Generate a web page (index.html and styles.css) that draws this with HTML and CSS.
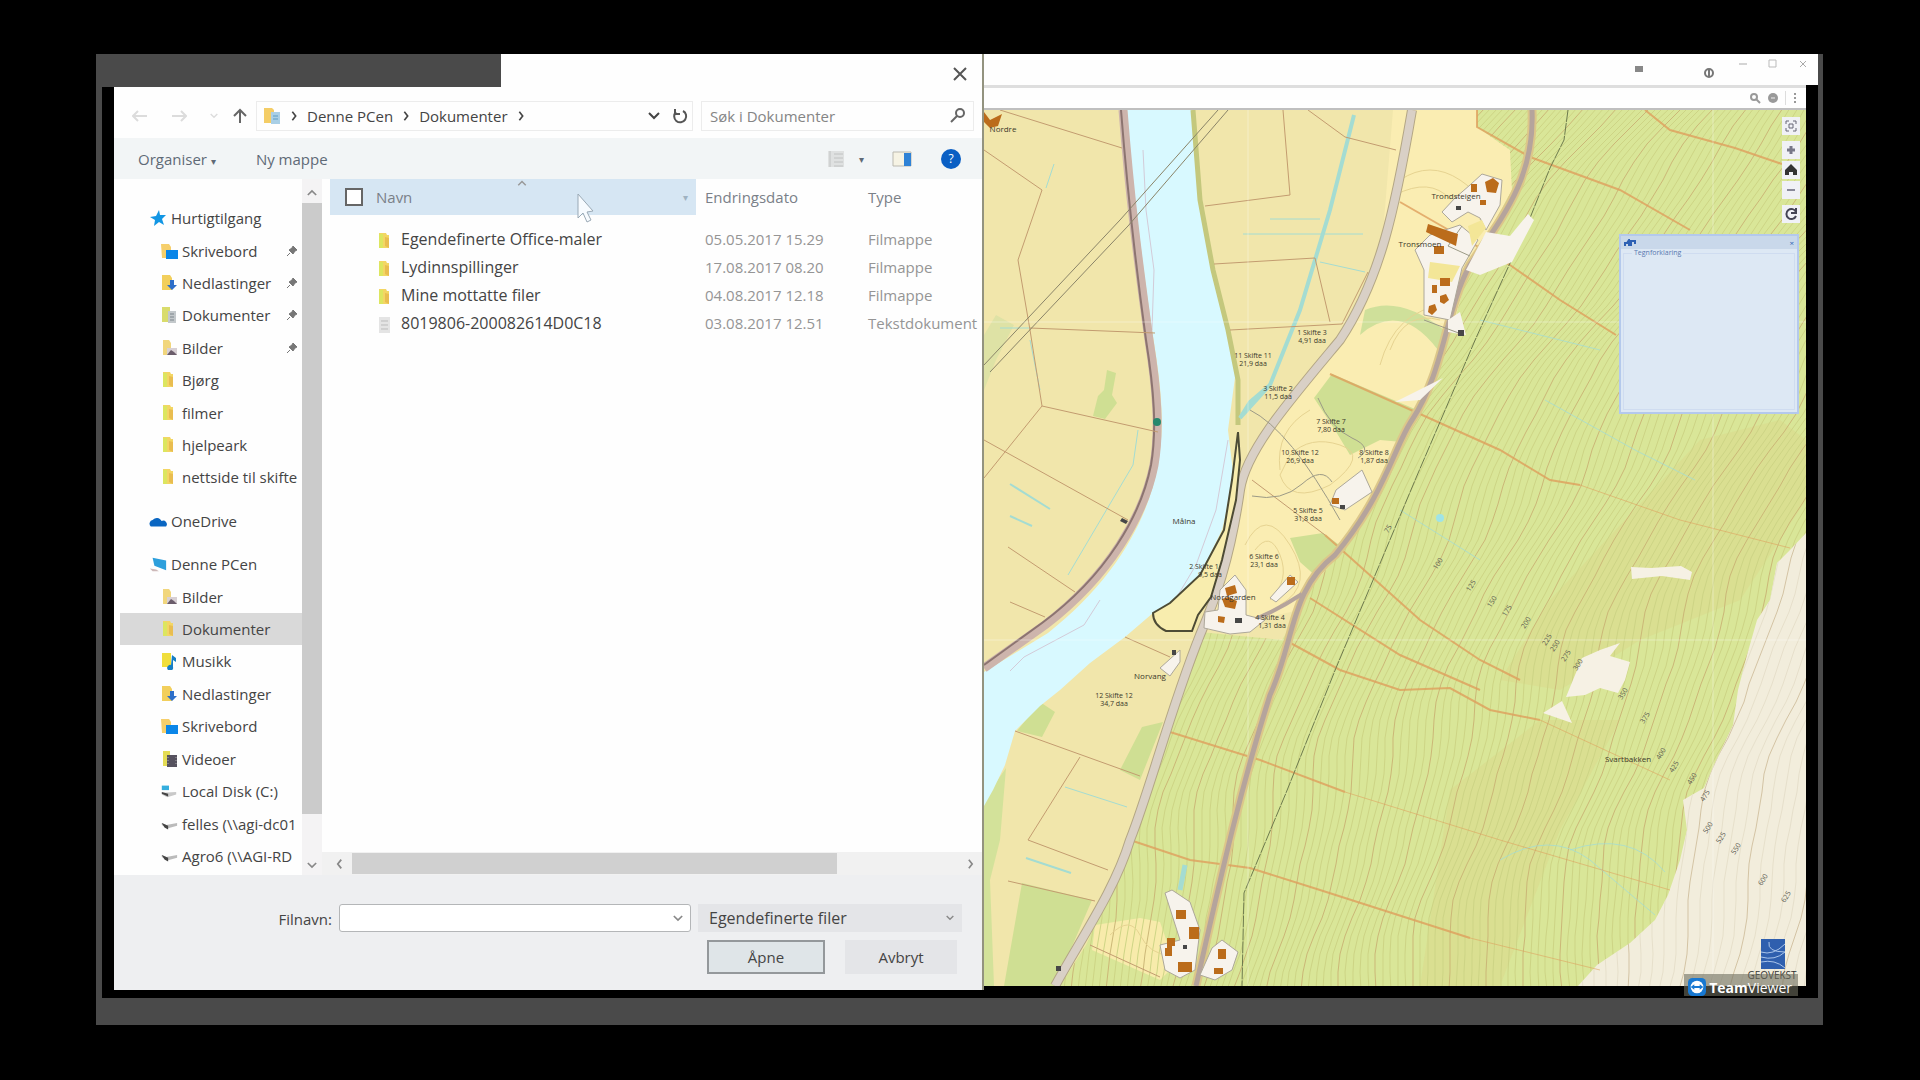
FILE: index.html
```html
<!DOCTYPE html>
<html lang="no">
<head>
  <meta charset="UTF-8" />
  <meta name="viewport" content="width=device-width, initial-scale=1.0"/>
  <title>Skiftekart</title>
  <link rel="stylesheet" href="styles.css">
</head>
<body>
  <svg class="symbols" width="0" height="0" aria-hidden="true">
    <symbol id="folder" viewBox="0 0 18 18"><path d="M3 1h7l1 2h2v13H3z" fill="#f3d664"/><path d="M3 2h4v14H3z" fill="#dce660"/><path d="M9 5l4 1v10l-4-2z" fill="#e9bd50"/></symbol>
    <symbol id="desktop" viewBox="0 0 18 18"><path d="M1 2h8l2 3v11H2z" fill="#f6cf6b"/><path d="M6 8h12v9H6z" fill="#0b86e8"/></symbol>
    <symbol id="download" viewBox="0 0 18 18"><path d="M2 1h8l2 3v12H2z" fill="#f2cf5c"/><path d="M10 6h4v5h3l-5 5-5-5h3z" fill="#2d6fc9"/></symbol>
    <symbol id="docs" viewBox="0 0 18 18"><path d="M2 1h8v15H2z" fill="#d9dc6c"/><path d="M8 5h8v12H8z" fill="#c3c8cb"/><path d="M10 8h4M10 11h4M10 14h4" stroke="#7d858b"/></symbol>
    <symbol id="library" viewBox="0 0 18 18"><path d="M1 1h8l2 2v13H1z" fill="#f4cd66"/><path d="M8 5h9v12H8z" fill="#a9cfe6"/><path d="M10 9h5M10 12h5" stroke="#5d9dc4"/></symbol>
    <symbol id="picture" viewBox="0 0 18 18"><path d="M3 1h6l2 3v12H3z" fill="#f1d67d"/><path d="M7 9h10v7H7z" fill="#d8d0d4"/><path d="M7 16l4-5 3 2 3 3z" fill="#6b5d6b"/></symbol>
    <symbol id="music" viewBox="0 0 18 18"><path d="M2 1h9v14H2z" fill="#f0de3c"/><path d="M12 3l4 3v4l-3-2v7a3 3 0 1 1-2-2z" fill="#167ec4"/></symbol>
    <symbol id="video" viewBox="0 0 18 18"><path d="M3 1h7v15H3z" fill="#e4dc55"/><path d="M7 5h10v12H7z" fill="#56525f"/><path d="M8 7v9M16 7v9" stroke="#aaa" stroke-dasharray="1 2"/></symbol>
    <symbol id="star" viewBox="0 0 18 18"><path d="M10 1l1 5 6 0-4 4 2 6-5-3-5 4 1-6-5-3 6-1z" fill="#1296e4"/></symbol>
    <symbol id="cloud" viewBox="0 0 20 18"><path d="M2 15a4 4 0 0 1 2-7 6 6 0 0 1 10 1 4 4 0 0 1 5 6z" fill="#0a66c2"/></symbol>
    <symbol id="pc" viewBox="0 0 20 18"><path d="M4 2l15 3v11L6 11z" fill="#2d9fdc"/><path d="M1 14l7 1 3 2-7 0z" fill="#cdb9b9"/></symbol>
    <symbol id="disk" viewBox="0 0 20 18"><path d="M2 3h8v5H2z" fill="#35aede"/><path d="M2 11l16-1v3l-10 3-6-3z" fill="#c9c9c9"/><path d="M2 10l7 2v3l-7-3z" fill="#444"/></symbol>
    <symbol id="netdisk" viewBox="0 0 20 18"><path d="M2 8l5 2 12-2v3l-11 3-6-4z" fill="#bbb"/><path d="M2 8l7 3v4l-4-2z" fill="#444"/></symbol>
    <symbol id="pin" viewBox="0 0 12 12"><path d="M7 1l4 4-2 1-2 3-4-4 3-2zM4 8l-3 3" fill="#777" stroke="#777"/></symbol>
    <symbol id="down" viewBox="0 0 12 8"><path d="M1 1l5 5 5-5" fill="none" stroke="currentColor" stroke-width="2"/></symbol>
    <symbol id="right" viewBox="0 0 8 12"><path d="M2 1l4 5-4 5" fill="none" stroke="currentColor" stroke-width="2"/></symbol>
  </svg>

  <main class="screen">
    <section class="dialog" aria-label="Åpne">
      <div class="dialog-top">
        <div class="backdrop"></div>
        <button class="close" aria-label="Lukk"><svg width="16" height="16"><path d="M2 2l12 12M14 2L2 14" stroke="#555" stroke-width="2"/></svg></button>
      </div>

      <div class="dialog-body">
        <div class="nav-row">
          <button class="nav-btn dim" aria-label="Tilbake"><svg width="16" height="12"><path d="M15 6H2M6 1L1 6l5 5" fill="none" stroke="currentColor" stroke-width="2"/></svg></button>
          <button class="nav-btn dim" aria-label="Fram"><svg width="16" height="12"><path d="M1 6h13M10 1l5 5-5 5" fill="none" stroke="currentColor" stroke-width="2"/></svg></button>
          <button class="nav-btn dim small" aria-label="Nylige steder"><svg width="8" height="6"><use href="#down"/></svg></button>
          <button class="nav-btn up" aria-label="Opp"><svg width="16" height="16"><path d="M8 15V2M2 8l6-6 6 6" fill="none" stroke="currentColor" stroke-width="2"/></svg></button>
          <div class="address">
            <svg width="18" height="18"><use href="#library"/></svg>
            <svg width="8" height="10"><use href="#right"/></svg>
            <a href="#">Denne PCen</a>
            <svg width="8" height="10"><use href="#right"/></svg>
            <a href="#">Dokumenter</a>
            <svg width="8" height="10"><use href="#right"/></svg>
            <button class="history" aria-label="Tidligere plasseringer"><svg width="12" height="8"><use href="#down"/></svg></button>
            <button class="reload" aria-label="Oppdater"><svg width="16" height="16"><path d="M4 4a6 6 0 1 0 7-1M3 1v5h5" fill="none" stroke="#555" stroke-width="2"/></svg></button>
          </div>
          <div class="search">
            <input type="text" aria-label="Søk i Dokumenter" placeholder="Søk i Dokumenter" />
            <svg width="18" height="18"><circle cx="11" cy="6" r="4" fill="none" stroke="#666" stroke-width="2"/><path d="M8 9l-6 6" stroke="#666" stroke-width="2"/></svg>
          </div>
        </div>

        <div class="tools">
          <button>Organiser <span class="tri">▾</span></button>
          <button>Ny mappe</button>
          <div class="view-tools">
            <button aria-label="Visning"><svg width="18" height="18"><path d="M1 1h16v16H1z" fill="#dfe1e1"/><path d="M3 1v16M7 4h9M7 8h9M7 12h9M7 16h9" stroke="#c0c2c2"/></svg></button>
            <button class="tri" aria-label="Flere visninger">▾</button>
            <button aria-label="Forhåndsvisning"><svg width="20" height="16"><path d="M1 1h18v14H1z" fill="#f6f3e4" stroke="#bbb9b0"/><path d="M12 2h7v13h-7z" fill="#2f82d6"/></svg></button>
            <button aria-label="Hjelp"><svg width="22" height="22"><circle cx="11" cy="11" r="10" fill="#0a5fc4"/><text x="11" y="15" class="help-mark">?</text></svg></button>
          </div>
        </div>

        <div class="main">
          <nav class="tree">
            <ul>
              <li class="root"><svg><use href="#star"/></svg><a href="#">Hurtigtilgang</a></li>
              <li><svg><use href="#desktop"/></svg><a href="#">Skrivebord</a><svg class="pin"><use href="#pin"/></svg></li>
              <li><svg><use href="#download"/></svg><a href="#">Nedlastinger</a><svg class="pin"><use href="#pin"/></svg></li>
              <li><svg><use href="#docs"/></svg><a href="#">Dokumenter</a><svg class="pin"><use href="#pin"/></svg></li>
              <li><svg><use href="#picture"/></svg><a href="#">Bilder</a><svg class="pin"><use href="#pin"/></svg></li>
              <li><svg><use href="#folder"/></svg><a href="#">Bjørg</a></li>
              <li><svg><use href="#folder"/></svg><a href="#">filmer</a></li>
              <li><svg><use href="#folder"/></svg><a href="#">hjelpeark</a></li>
              <li><svg><use href="#folder"/></svg><a href="#">nettside til skifte</a></li>
              <li class="root apart"><svg><use href="#cloud"/></svg><a href="#">OneDrive</a></li>
              <li class="root apart"><svg><use href="#pc"/></svg><a href="#">Denne PCen</a></li>
              <li><svg><use href="#picture"/></svg><a href="#">Bilder</a></li>
              <li class="selected"><svg><use href="#folder"/></svg><a href="#">Dokumenter</a></li>
              <li><svg><use href="#music"/></svg><a href="#">Musikk</a></li>
              <li><svg><use href="#download"/></svg><a href="#">Nedlastinger</a></li>
              <li><svg><use href="#desktop"/></svg><a href="#">Skrivebord</a></li>
              <li><svg><use href="#video"/></svg><a href="#">Videoer</a></li>
              <li><svg><use href="#disk"/></svg><a href="#">Local Disk (C:)</a></li>
              <li><svg><use href="#netdisk"/></svg><a href="#">felles (\\agi-dc01</a></li>
              <li><svg><use href="#netdisk"/></svg><a href="#">Agro6 (\\AGI-RD</a></li>
            </ul>
          </nav>
          <div class="vscroll">
            <svg class="flip" width="10" height="7"><use href="#down"/></svg>
            <div class="vthumb"></div>
            <svg width="10" height="7"><use href="#down"/></svg>
          </div>

          <div class="files">
            <table>
              <colgroup><col class="col-name"><col class="col-date"><col></colgroup>
              <thead>
                <tr>
                  <th class="name-head">
                    <div class="head-cell">
                      <input type="checkbox" id="all" aria-label="Merk alle"><label for="all">Navn</label>
                      <span class="tri">▾</span>
                    </div>
                    <svg class="sort" width="10" height="6"><use href="#down"/></svg>
                    <svg class="pointer" width="20" height="34"><path d="M3 1v24l5-5 4 9 4-2-4-8 6-1z" fill="#f7fbff" stroke="#9aa9b5"/></svg>
                  </th>
                  <th>Endringsdato</th>
                  <th>Type</th>
                </tr>
              </thead>
              <tbody>
                <tr><td><svg><use href="#folder"/></svg>Egendefinerte Office-maler</td><td>05.05.2017 15.29</td><td>Filmappe</td></tr>
                <tr><td><svg><use href="#folder"/></svg>Lydinnspillinger</td><td>17.08.2017 08.20</td><td>Filmappe</td></tr>
                <tr><td><svg><use href="#folder"/></svg>Mine mottatte filer</td><td>04.08.2017 12.18</td><td>Filmappe</td></tr>
                <tr><td><svg><path d="M3 1h11v16H3z" fill="#e4e4e4"/><path d="M5 5h7M5 9h7M5 13h7" stroke="#bbb"/></svg>8019806-200082614D0C18</td><td>03.08.2017 12.51</td><td>Tekstdokument</td></tr>
              </tbody>
            </table>
            <div class="hscroll">
              <svg class="flip" width="7" height="12"><use href="#right"/></svg>
              <div class="hthumb"></div>
              <svg width="7" height="10"><use href="#right"/></svg>
            </div>
          </div>
        </div>

        <form class="footer">
          <label for="filename">Filnavn:</label>
          <div class="combo"><input type="text" id="filename"><svg width="10" height="7"><use href="#down"/></svg></div>
          <div class="combo kind">
            <select aria-label="Filtype"><option>Egendefinerte filer</option></select>
            <svg width="8" height="6"><use href="#down"/></svg>
          </div>
          <div class="actions">
            <button type="button" class="open">Åpne</button>
            <button type="button">Avbryt</button>
          </div>
        </form>
      </div>
    </section>

    <section class="browser" aria-label="Kart">
      <div class="window-bar">
        <svg class="tab-mark" width="10" height="8"><path d="M1 1h8v6H1z" fill="#888"/></svg>
        <svg class="user" width="12" height="12"><circle cx="6" cy="6" r="4" fill="none" stroke="#777" stroke-width="2"/><path d="M6 3v6" stroke="#777" stroke-width="2"/></svg>
        <button aria-label="Minimer"><svg width="10" height="10"><path d="M1 5h8" stroke="#aaa"/></svg></button>
        <button aria-label="Maksimer"><svg width="10" height="10"><path d="M1 1h7v7H1z" fill="none" stroke="#bbb"/></svg></button>
        <button aria-label="Lukk vindu"><svg width="10" height="10"><path d="M2 2l6 6M8 2L2 8" stroke="#aaa"/></svg></button>
      </div>
      <div class="url-bar">
        <svg width="12" height="12"><circle cx="5" cy="5" r="3" fill="none" stroke="#999" stroke-width="2"/><path d="M7 7l4 4" stroke="#999" stroke-width="2"/></svg>
        <svg width="12" height="12"><circle cx="6" cy="6" r="5" fill="#999"/><path d="M4 6h4" stroke="#eee"/></svg>
        <span class="divider"></span>
        <svg width="6" height="12"><path d="M3 1v2M3 5v2M3 9v2" stroke="#999" stroke-width="2"/></svg>
      </div>

      <div class="map">
        <svg class="map-canvas" viewBox="984 110 822 876" preserveAspectRatio="xMidYMid slice" role="img" aria-label="Kart over skifter">
          <defs>
            <path id="hill" d="M1477 110V127L1510 150 1512 190 1490 230 1468 272 1452 330 1432 385 1412 425 1397 450 1380 495 1345 548 1310 588 1300 610 1282 640 1200 632 1180 680 1165 733 1138 830 1086 945 1060 986H1806V110Z"/>
            <clipPath id="hillClip"><use href="#hill"/></clipPath>
            <path id="fjell" d="M1806 533L1790 550 1777 563 1770 600 1757 620 1747 655 1738 690 1733 725 1714 765 1704 788 1683 800 1687 830 1680 860 1668 895 1655 920 1630 943 1597 965 1578 986H1806Z"/>
            <clipPath id="fjellClip"><use href="#fjell"/></clipPath>
          </defs>
          <rect x="984" y="110" width="822" height="876" fill="#f1e6ab"/>
          <path d="M1393 110H1477V127L1510 150 1512 190 1452 330 1412 425 1380 495 1300 610 1200 632 1240 470 1330 350 1380 270Z" fill="#faedb2"/>
          <!-- forest -->
          <use href="#hill" fill="#d9e698"/>
          <path d="M1550 600L1700 440 1780 420 1806 440V500L1740 600 1640 640 1560 690 1500 680ZM1450 790L1540 720 1620 720 1560 830 1500 986H1420Z" fill="#dadb8c" opacity=".6"/>
          <path d="M1314 398L1332 374 1422 412 1402 442 1380 440 1350 455 1335 430ZM1290 538L1323 533 1342 547 1318 578 1300 562ZM1040 702L1055 712 1042 737 1017 731ZM1142 727L1163 722 1140 780 1120 770ZM1022 883L1092 900 1055 986H1004ZM1107 370l9 3-4 22 5 8-12 16-12-3 5-20 6-6Z" fill="#cfdf93"/>
          <path d="M984 800L1006 768 1000 840 990 880 994 986H984Z" fill="#d3e29a"/>
          <path d="M984 335l12-20 18 10-18 35-12 30Z" fill="#d6e0a2" opacity=".7"/>
          <path d="M1095 925L1140 918 1160 922 1175 965 1160 980 1092 950Z" fill="#f8ebab"/>
          <path d="M1365 310Q1400 295 1444 330L1438 350Q1400 300 1360 335Z" fill="#cfe09a"/>
          <g clip-path="url(#hillClip)"><g id="contours" class="contours"></g></g>
          <g class="field-contours">
            <path d="M1400 180q30-20 60 0t20 40M1395 195q35-18 55 4M1390 350q15-40 50-30M1380 365q15-55 65-60M1290 455q20-20 50-10t-10 40q-40 20-50-10zM1280 470q-5-40 30-60M1245 545q20-40 45 0t-10 60M1255 550q15-20 25 5t-10 45M1110 935q20-20 30 0t30 20"/>
          </g>
          <use href="#fjell" fill="#f2eddc"/>
          <g clip-path="url(#fjellClip)"><g id="fjellContours" class="contours high"></g></g>
          <path d="M1566 697L1582 658 1600 650 1620 643 1610 656 1630 662 1625 680 1618 693 1600 688 1585 695ZM1543 713L1562 701 1572 723ZM1631 567l20 1 30-2 11 6-2 8-28-4-30 3Z" fill="#f6f1e4"/>
          <!-- river -->
          <path d="M1127 110C1133 190 1142 260 1152 330C1160 380 1166 420 1158 465C1148 520 1115 580 1048 633L984 672V806L993 790 1005 765 1015 731 1040 706 1060 690 1090 663 1125 637 1153 613 1170 603 1200 575 1222 530 1234 480 1228 430 1236 370 1228 330 1213 270 1200 200 1193 110Z" fill="#d8f9ff"/>
          <path d="M1193 110L1200 200 1213 270 1228 330 1238 380V425" fill="none" stroke="#c4c87d" stroke-width="5"/>
          <path d="M1143 150l3 60 8 60-2 60M1228 440l-12 70-20 55-18 30M1100 600l-16 25-60 32-14 14" fill="none" stroke="#d3cbd8"/>
          <g class="dyke"><path d="M1123 110C1130 200 1138 260 1149 340C1157 390 1160 430 1154 465C1144 515 1110 575 1045 625L984 668" stroke="#cdb4ac" stroke-width="9"/><path d="M1121 110C1128 200 1135 260 1146 340C1154 390 1157 430 1151 465C1141 515 1107 575 1042 623L984 665" stroke="#8c7470" stroke-width="2"/></g>
          <!-- streams -->
          <g fill="none" stroke="#a4dcd2">
            <path d="M1354 115L1330 210 1300 310 1270 385" stroke-width="4"/>
            <path d="M1270 385L1240 418 1250 402Z" fill="#d8f9ff" stroke-width="4"/>
            <path d="M1010 484l40 25M1010 516l22 10M1026 858l45 15" stroke-width="2"/>
            <path d="M1030 340l10 50M1000 328h30M1054 164l-8 24M1138 430l-5 35-65 110M1065 787l62 20M1320 262l45 10M1243 234h120M1270 219h50"/>
            <path d="M1185 865l-5 25" stroke-width="5"/>
            <path d="M1400 510l80 50M1545 400l90 50 60 30M1500 860q50-30 90 0l65 55M1570 850q60-20 95 22M1480 320l120 30" opacity=".8"/>
          </g>
          <circle cx="1440" cy="518" r="4" fill="#a0e4e6"/>
          <!-- property borders -->
          <g fill="none" stroke="#c39c70">
            <path d="M984 150L1042 190 1018 260 1030 330 1042 406 984 478M1042 406L1158 432M984 440L1128 520M1000 110L1122 148M1030 328L1155 333M1008 547L1075 592M1010 602L1045 617M1205 206L1290 195 1283 110M1214 264L1315 258 1330 322M1230 330L1342 324 1368 272M1308 110L1345 137 1396 150M1015 731L1140 776M1080 757L1028 840 1108 870M1008 881L1095 901M1252 480L1325 535M1125 637l45 20M1090 945l70 32"/>
          </g>
          <g fill="none" stroke="#df9f5c" stroke-width="2" opacity=".8">
            <path d="M1477 110V127L1530 157 1620 190 1690 230M1400 202L1440 225 1510 265 1560 300 1616 335M1645 110L1670 130 1735 148 1782 164M1330 374L1420 414 1500 450 1550 480 1580 485M1325 535L1420 620 1480 660 1520 680M1310 598L1400 655 1480 690M1285 640L1340 670 1400 690 1450 688 1490 710 1540 720M1170 732L1260 760 1345 792M1130 840L1190 860 1250 868 1320 890 1420 922 1470 938"/>
            <path d="M1580 485L1680 520 1790 548M1540 720L1670 780M1345 792L1500 840 1670 890M1470 938L1600 970" stroke-width="1" opacity=".7"/>
          </g>
          <path d="M984 365L1120 220 1218 110M990 372L1128 226 1228 110" fill="none" stroke="#8a8468"/>
          <path d="M1568 110l-4 30-14 28-24 60-50 110-60 140-80 190-50 125-42 100-2 93" fill="none" stroke="#6d7a4d" stroke-dasharray="12 1"/>
          <path d="M1248 110V986M984 322H1806M984 640H1806M1713 110V986" fill="none" stroke="#fff" opacity=".35"/>
          <!-- roads -->
          <g fill="none">
            <path d="M1412 110C1395 210 1380 280 1340 340C1290 400 1246 450 1240 490C1230 560 1215 600 1200 635C1170 710 1150 790 1130 840C1115 890 1080 940 1055 986" stroke="#b3a684" stroke-width="10"/>
            <path d="M1412 110C1395 210 1380 280 1340 340C1290 400 1246 450 1240 490C1230 560 1215 600 1200 635C1170 710 1150 790 1130 840C1115 890 1080 940 1055 986" stroke="#d9d0c6" stroke-width="8"/>
            <path d="M1532 110C1535 180 1500 220 1470 265C1445 310 1445 370 1412 420C1395 445 1385 495 1335 555C1290 590 1295 640 1270 695C1240 790 1220 880 1196 986" stroke="#dcc68a" stroke-width="9"/>
            <path d="M1532 110C1535 180 1500 220 1470 265C1445 310 1445 370 1412 420C1395 445 1385 495 1335 555C1290 590 1295 640 1270 695C1240 790 1220 880 1196 986" stroke="#b5a49c" stroke-width="5"/>
            <path d="M1302 594Q1270 615 1240 625" stroke="#b5a49c" stroke-width="4"/>
          </g>
          <!-- farmyards -->
          <g fill="#f7f3ec" stroke="#ada89a">
            <path d="M1470 185L1482 174 1502 180 1500 205 1486 230 1480 218 1468 212 1452 222 1442 212 1455 198Z"/>
            <path d="M1486 232L1510 236 1528 214 1534 220 1512 262 1480 275 1466 270Z" stroke="none"/>
            <path d="M1430 235L1460 225 1478 240 1462 268 1450 320 1424 315 1424 270 1415 250Z"/>
            <path d="M1448 320L1460 312 1466 335 1448 332ZM1443 378L1420 400 1395 402Z" stroke="none"/>
            <path d="M1336 490L1362 470 1372 492 1345 510 1330 505Z"/>
            <path d="M1220 590L1235 575 1246 590V615L1265 620 1250 632 1230 634 1204 628 1205 612 1218 610Z"/>
            <path d="M1290 575L1298 582 1276 602 1270 598ZM1180 650l-20 18 10 8 10-14Z"/>
            <path d="M1165 893L1172 890 1190 902 1200 930 1195 970 1180 978 1165 970 1160 945 1180 940Z"/>
            <path d="M1212 948L1222 940 1238 952 1232 970 1215 980 1200 975Z"/>
          </g>
          <path d="M1468 226l14-6 4 8-14 18z" fill="#f3e697"/>
          <path d="M1430 262l30 4-8 16-24-4z" fill="#f3e697"/>
          <path d="M1250 410q40 20 90 110M1318 398q12 30 34 40t6 20M1252 496q30 6 50-12t30-2M1462 226l-14 20 22 10M1424 320l40 15" fill="none" stroke="#9c9a86"/>
          <path d="M1485 182l8-4 6 5-3 10-9-1zM1471 184h6v8h-6ZM1480 200h6v5h-6ZM1428 224l30 10 -2 12-30-14ZM1434 246h10v8h-10ZM1440 278h10v8h-10ZM1432 285h5v8h-5ZM1440 296l6-2 3 6-5 4-4-2ZM1429 306l6-2 2 6-5 5-4-3ZM1225 588l10-3 2 8-10 3ZM1222 599l6-2 9 4-2 8-10-2ZM1218 616l7 1-1 6-6-1ZM1287 577h8v8h-8ZM1332 498h7v6h-7ZM1176 910h10v9h-10ZM1189 927h10v12h-10ZM1167 938h8v8h-3v10h-7v-8h2ZM1178 962h14v10h-14ZM1218 949h8v10h-8ZM1214 968h9v6h-9ZM984 112l6 8 12-6-4 12-8 2-6-6Z" fill="#bb6c1b"/>
          <path d="M1340 505h5v4h-5ZM1458 330h6v6h-6ZM1456 206h5v4h-5ZM1235 618h7v5h-7ZM1183 945h4v4h-4ZM1056 966h5v5h-5ZM1172 650h4v5h-4ZM1122 518l6 3-2 3-6-3Z" fill="#474747"/>
          <circle cx="1157" cy="422" r="4" fill="#26886c"/>
          <!-- selected field -->
          <path d="M1238 432L1232 480 1224 530 1200 575 1170 603 1153 613Q1153 625 1166 631L1192 631 1198 615 1211 597 1222 560 1236 500 1240 460Z" fill="#f8edae" stroke="#4d4b35" stroke-width="2"/>
          <g class="field-labels">
            <text x="1312" y="335">1 Skifte 3<tspan x="1312" dy="8">4,91 daa</tspan></text>
            <text x="1253" y="358">11 Skifte 11<tspan x="1253" dy="8">21,9 daa</tspan></text>
            <text x="1278" y="391">3 Skifte 2<tspan x="1278" dy="8">11,5 daa</tspan></text>
            <text x="1331" y="424">7 Skifte 7<tspan x="1331" dy="8">7,80 daa</tspan></text>
            <text x="1300" y="455">10 Skifte 12<tspan x="1300" dy="8">26,9 daa</tspan></text>
            <text x="1374" y="455">8 Skifte 8<tspan x="1374" dy="8">1,87 daa</tspan></text>
            <text x="1308" y="513">5 Skifte 5<tspan x="1308" dy="8">31,8 daa</tspan></text>
            <text x="1264" y="559">6 Skifte 6<tspan x="1264" dy="8">23,1 daa</tspan></text>
            <text x="1204" y="569">2 Skifte 1<tspan x="1210" dy="8">9,5 daa</tspan></text>
            <text x="1114" y="698">12 Skifte 12<tspan x="1114" dy="8">34,7 daa</tspan></text>
            <text x="1270" y="620">4 Skifte 4<tspan x="1272" dy="8">1,31 daa</tspan></text>
          </g>
          <g class="place-labels">
            <text x="1184" y="524">Målna</text><text x="1150" y="679">Norvang</text>
            <text x="1456" y="199">Trondsteigen</text><text x="1420" y="247">Tronsmoen</text>
            <text x="1233" y="600">Nordgarden</text>
            <text x="1628" y="762">Svartbakken</text><text x="1003" y="132">Nordre</text>
          </g>
          <g id="heights" class="height-labels"></g>
          <path d="M1761 939h24v30h-24Z" fill="#2f5fae"/>
          <path d="M1761 952q12 4 24-8M1761 957q14 4 24-5M1769 942q-2 10 16 10M1761 962q14-3 24 6" fill="none" stroke="#a9c4ea"/>
          <text x="1772" y="979" class="logo-text">GEOVEKST</text>
        </svg>

        <div class="map-buttons">
          <button aria-label="Fullskjerm"><svg width="12" height="12"><path d="M1 4V1h3M8 1h3v3M11 8v3H8M4 11H1V8M4 4h4v4H4z" fill="none" stroke="#667"/></svg></button>
          <button class="apart" aria-label="Zoom inn"><svg width="10" height="10"><path d="M5 1v8M1 5h8" stroke="#778" stroke-width="3"/></svg></button>
          <button aria-label="Hjem"><svg width="12" height="12"><path d="M6 0l6 6v5H8V8H4v3H0V6z" fill="#333"/></svg></button>
          <button aria-label="Zoom ut"><svg width="10" height="10"><path d="M1 5h8" stroke="#889" stroke-width="2"/></svg></button>
          <button class="apart" aria-label="Last på nytt"><svg width="14" height="14"><path d="M12 5a5 5 0 1 0 0 4M12 1v5H7" fill="none" stroke="#445" stroke-width="2"/></svg></button>
        </div>

        <aside class="legend">
          <div class="legend-bar">
            <svg width="12" height="8"><path d="M1 7V4h2l2-3v6M7 7V2h4v3" fill="none" stroke="#2e61b4" stroke-width="2"/></svg>
            <button aria-label="Lukk tegnforklaring">×</button>
          </div>
          <fieldset><legend>Tegnforklaring</legend></fieldset>
        </aside>
      </div>

      <div class="viewer-badge">
        <svg width="18" height="18" viewBox="0 0 20 20"><rect width="20" height="20" rx="5" fill="#1778d2"/><circle cx="10" cy="10" r="7" fill="#fff"/><path d="M3 10l4-3v2h6V7l4 3-4 3v-2H7v2z" fill="#1778d2"/></svg>
        <span><b>Team</b>Viewer</span>
      </div>
    </section>
  </main>

  <script>
    const ns = "http://www.w3.org/2000/svg";

    function drawContours(id, from, to, step, wave) {
      const group = document.getElementById(id);
      let n = 0;
      for (let base = from; base < to; base += step) {
        let d = "";
        for (let y = 990; y >= 100; y -= 18) {
          const t = (990 - y) / 880;
          const bend = Math.sin(y / 46 + base / 90) * wave + Math.sin(y / 19 + base / 37) * 2;
          const x = base + 90 * t + 320 * t * t + bend;
          d += (d ? "L" : "M") + x.toFixed(0) + " " + y;
        }
        const path = document.createElementNS(ns, "path");
        path.setAttribute("d", d);
        if (n % 5 === 0) path.setAttribute("class", "index-line");
        group.appendChild(path);
        n++;
      }
    }

    function drawHeights() {
      const group = document.getElementById("heights");
      const marks = [
        [1390, 530, 75], [1440, 565, 100], [1473, 587, 125], [1494, 603, 150], [1509, 612, 175],
        [1528, 624, 200], [1549, 641, 225], [1557, 647, 250], [1568, 657, 275], [1580, 666, 300],
        [1625, 695, 350], [1647, 719, 375], [1663, 755, 400], [1676, 768, 425], [1694, 780, 450],
        [1707, 797, 475], [1710, 829, 500], [1723, 839, 525], [1738, 850, 550], [1765, 881, 600], [1788, 898, 625]
      ];
      marks.forEach(([x, y, height]) => {
        const text = document.createElementNS(ns, "text");
        text.setAttribute("transform", `translate(${x} ${y}) rotate(-58)`);
        text.textContent = height;
        group.appendChild(text);
      });
    }

    drawContours("contours", 820, 1820, 7, 8);
    drawContours("fjellContours", 1400, 1820, 11, 6);
    drawHeights();
  </script>
</body>
</html>
```
FILE: styles.css
```css
* {
  box-sizing: border-box;
}
body {
  margin: 0;
  height: 100vh;
  padding: 54px 97px 55px 96px;
  background: #000;
  font-family: "Open Sans", "Noto Sans", sans-serif;
  font-size: 15px;
  color: #444;
}
.symbols {
  position: absolute;
}
button {
  border: 0;
  padding: 0;
  background: none;
  font: inherit;
  color: inherit;
}
button svg {
  display: block;
}
a {
  color: inherit;
  text-decoration: none;
}
.tri {
  font-size: 10px;
}
.flip {
  transform: rotate(180deg);
}

.screen {
  height: 100%;
  display: grid;
  grid-template-columns: 882fr 834fr;
  grid-template-rows: minmax(0, 1fr);
  border: solid #4a4a4a;
  border-width: 0 5px 27px 6px;
}

/* file dialog */
.dialog {
  min-width: 0;
  display: flex;
  flex-direction: column;
  margin-bottom: 8px;
  border-right: 2px solid #93937f;
}
.dialog-top {
  display: flex;
  align-items: center;
  justify-content: space-between;
  height: 33px;
  padding-right: 14px;
  background: #fefefe;
}
.backdrop {
  align-self: stretch;
  width: 399px;
  background: #4a4a4a;
}
.close {
  padding-top: 6px;
}
.dialog-body {
  flex: 1;
  min-height: 0;
  display: flex;
  flex-direction: column;
  margin-left: 12px;
  background: #fefefe;
}
.nav-row {
  display: flex;
  align-items: center;
  height: 51px;
  padding: 6px 8px 0 18px;
}
.nav-btn {
  width: 39px;
  color: #666;
}
.dim {
  color: #dcdcdc;
}
.nav-btn.small {
  width: 22px;
}
.nav-btn.up {
  width: 24px;
}
.address {
  flex: 1;
  height: 30px;
  display: flex;
  align-items: center;
  gap: 9px;
  margin-right: 8px;
  padding-left: 6px;
  border: 1px solid #ececec;
}
.history {
  margin-left: auto;
}
.reload {
  padding: 0 4px 0 3px;
}
.search {
  width: 273px;
  height: 30px;
  display: flex;
  align-items: center;
  padding-right: 6px;
  border: 1px solid #ececec;
}
.search input {
  flex: 1;
  min-width: 0;
  border: 0;
  padding: 0 8px;
  font: inherit;
  background: none;
}
.search input::placeholder {
  color: #858585;
}
.tools {
  display: flex;
  align-items: center;
  gap: 40px;
  height: 41px;
  padding: 0 20px 0 24px;
  background: #f2f5f6;
  color: #5f6a76;
}
.view-tools {
  display: flex;
  align-items: center;
  gap: 14px;
  margin-left: auto;
}
.view-tools button:nth-child(n+3) {
  margin-left: 14px;
}
.help-mark {
  font-size: 12px;
  fill: #fff;
  text-anchor: middle;
}

.main {
  flex: 1;
  min-height: 0;
  display: flex;
}
.tree {
  width: 188px;
  padding: 23px 0 3px 6px;
  overflow: hidden;
}
.tree ul {
  height: 100%;
  display: flex;
  flex-direction: column;
  margin: 0;
  padding: 0;
  list-style: none;
}
.tree li {
  flex: 1;
  min-height: 0;
  display: flex;
  align-items: center;
  gap: 4px;
  padding-left: 40px;
  white-space: nowrap;
}
.tree li.root {
  padding-left: 29px;
}
.tree li.apart {
  margin-top: 11px;
}
.tree li.selected {
  background: #d9d9d9;
}
.tree svg {
  flex: none;
  width: 18px;
  height: 18px;
}
.tree .pin {
  width: 12px;
  height: 12px;
  margin: 0 4px 0 auto;
}
.vscroll {
  width: 20px;
  display: flex;
  flex-direction: column;
  align-items: center;
  padding: 10px 0 6px;
  background: #f4f3f4;
  color: #888;
}
.vthumb {
  flex: 1;
  width: 100%;
  margin: 7px 0 48px;
  background: #cbcbcb;
}
.files {
  flex: 1;
  min-width: 0;
  display: flex;
  flex-direction: column;
  justify-content: space-between;
  overflow: hidden;
}
table {
  width: calc(100% - 8px);
  margin-left: 8px;
  table-layout: fixed;
  border-collapse: collapse;
}
.col-name {
  width: 366px;
}
.col-date {
  width: 163px;
}
th {
  position: relative;
  height: 36px;
  padding: 0 0 0 9px;
  text-align: left;
  font-weight: 400;
  color: #7a8088;
}
.name-head {
  padding: 0 8px 0 15px;
  background: #d6e6f3;
}
.head-cell {
  display: flex;
  align-items: center;
}
.head-cell input {
  appearance: none;
  width: 18px;
  height: 18px;
  margin: 0 13px 0 0;
  border: 2px solid #666;
  background: #fff;
}
.head-cell .tri {
  margin-left: auto;
  color: #9fb2c1;
}
.sort {
  position: absolute;
  top: 1px;
  left: 51%;
  color: #999;
  transform: rotate(180deg);
}
.pointer {
  position: absolute;
  top: 14px;
  left: 67%;
}
tbody::before {
  content: "";
  display: block;
  height: 10px;
}
td {
  height: 28px;
  padding: 0 0 0 9px;
  overflow: hidden;
  white-space: nowrap;
  color: #959595;
}
td:first-child {
  padding-left: 46px;
  font-size: 16px;
  color: #444;
}
td svg {
  width: 18px;
  height: 18px;
  margin-right: 7px;
  vertical-align: middle;
}
.hscroll {
  height: 23px;
  display: flex;
  align-items: center;
  padding: 0 8px 0 14px;
  background: #f1f1f1;
  color: #888;
}
.hthumb {
  width: 76%;
  height: 21px;
  margin: 0 auto 0 9px;
  background: #d0d0d0;
}

.footer {
  display: grid;
  grid-template-columns: 218px 352px 264px;
  grid-template-rows: 30px 34px;
  gap: 6px 7px;
  padding: 29px 0 16px;
  background: #eeeff1;
}
.footer label {
  align-self: center;
  text-align: right;
}
.combo {
  position: relative;
  color: #888;
}
.combo input,
.combo select {
  appearance: none;
  width: 100%;
  height: 28px;
  border: 1px solid #b4b6b8;
  padding: 0 8px;
  font: inherit;
  color: #444;
  background: #fff;
}
.combo input {
  border-radius: 3px;
}
.combo svg {
  position: absolute;
  top: 11px;
  right: 8px;
}
.kind select {
  padding-left: 10px;
  border-color: #e4e5e8;
  background: #e4e5e8;
  font-size: 16px;
}
.actions {
  grid-column: 3;
  display: flex;
  gap: 20px;
  padding-left: 9px;
}
.actions button {
  width: 112px;
  background: #e4e5e8;
}
.actions .open {
  width: 118px;
  border: 2px solid #94989b;
  background: #dfe5e8;
}

/* map window */
.browser {
  position: relative;
  min-width: 0;
  display: flex;
  flex-direction: column;
  margin-bottom: 12px;
}
.window-bar {
  display: flex;
  align-items: flex-start;
  height: 31px;
  padding: 5px 10px 0 0;
  background: #fefefe;
}
.window-bar button {
  margin-left: 20px;
}
.tab-mark {
  margin: 6px 59px 0 auto;
}
.user {
  margin: 8px 3px 0 0;
}
.url-bar {
  display: flex;
  align-items: center;
  justify-content: flex-end;
  gap: 6px;
  height: 25px;
  margin-right: 12px;
  padding-right: 8px;
  background: #fefefe;
  border-top: 3px solid #dedede;
  border-bottom: 2px solid #bfbfbf;
}
.divider {
  width: 1px;
  height: 14px;
  background: #ddd;
}
.map {
  position: relative;
  flex: 1;
  min-height: 0;
  margin-right: 12px;
}
.map-canvas {
  display: block;
  width: 100%;
  height: 100%;
}
.dyke {
  fill: none;
}
.contours {
  fill: none;
  stroke: #cdd485;
}
.contours .index-line {
  stroke: #cbb777;
}
.contours.high {
  stroke: #e6dfcb;
}
.contours.high .index-line {
  stroke: #d3c3a4;
}
.field-contours {
  fill: none;
  stroke: #e6d391;
}
.field-labels,
.place-labels {
  font-size: 7px;
  fill: #3b382a;
  text-anchor: middle;
}
.place-labels {
  font-size: 8px;
}
.height-labels {
  font-size: 7px;
  fill: #5a5a50;
  text-anchor: middle;
}
.logo-text {
  font-size: 10px;
  fill: #333;
  text-anchor: middle;
}
.map-buttons {
  position: absolute;
  top: 7px;
  right: 6px;
  display: flex;
  flex-direction: column;
  gap: 2px;
}
.map-buttons button {
  width: 18px;
  height: 18px;
  display: flex;
  align-items: center;
  justify-content: center;
  background: #f0f1f6;
}
.map-buttons .apart {
  margin-top: 4px;
}
.legend {
  position: absolute;
  top: 124px;
  right: 7px;
  width: 180px;
  height: 180px;
  display: flex;
  flex-direction: column;
  border: 2px solid #b4c9ec;
  background: #dde8f4;
}
.legend-bar {
  display: flex;
  align-items: center;
  justify-content: space-between;
  height: 13px;
  padding: 0 3px;
  background: #c9d8ea;
  font-size: 8px;
  color: #2e61b4;
}
.legend fieldset {
  flex: 1;
  margin: 0 2px 2px;
  padding: 0 8px;
  border: 1px solid #cfdcf0;
}
.legend legend {
  padding: 0 2px;
  font-size: 7px;
  line-height: 8px;
  color: #5878b0;
}
.viewer-badge {
  position: absolute;
  right: 20px;
  bottom: -10px;
  display: flex;
  align-items: center;
  gap: 3px;
  height: 22px;
  padding: 4px 6px 0 4px;
  background: rgba(110, 110, 95, 0.6);
  color: #fff;
  font-size: 14px;
}
```
